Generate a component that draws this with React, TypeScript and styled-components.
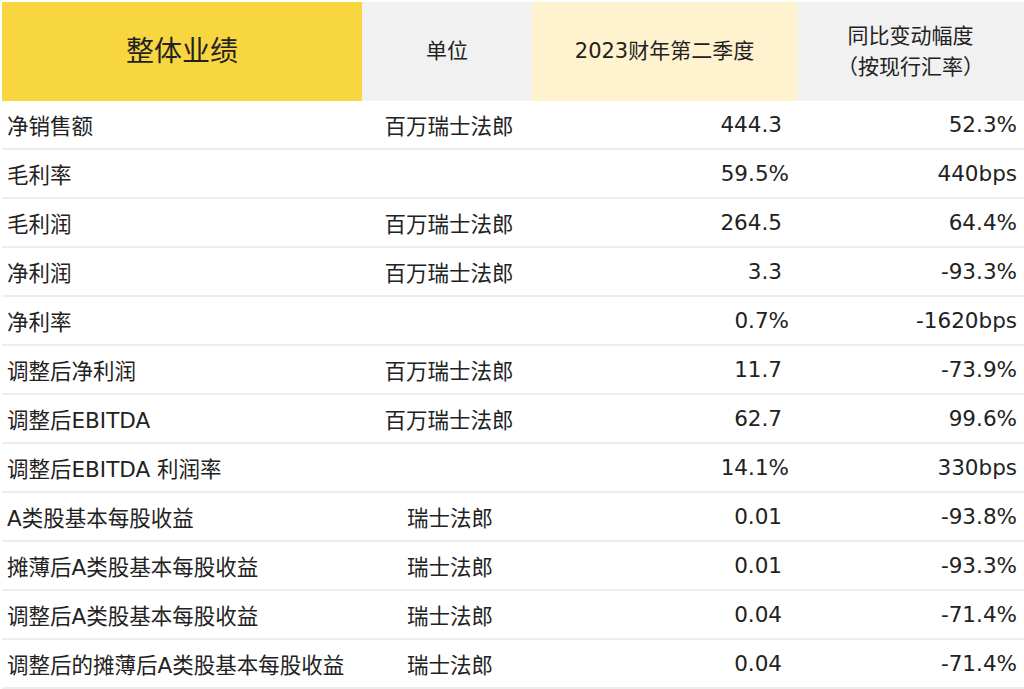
import React from 'react'
import styled, { createGlobalStyle } from 'styled-components'

const GlobalStyle = createGlobalStyle`
  body {
    margin: 0;
    background: #ffffff;
    font-family: "DejaVu Sans", "Noto Sans CJK SC", sans-serif;
    color: #222222;
  }
`;

const Table = styled("div")`
  display: grid;
  grid-template-columns: 360px 170px 265px 227px;
  padding: 2px 0 0 2px;
  width: 1024px;
  box-sizing: border-box;
`;

const HeadCell = styled("div")<{ $bg: string; $big?: boolean }>`
  height: 99px;
  background: ${p => p.$bg};
  display: flex;
  flex-direction: column;
  align-items: center;
  justify-content: center;
  font-size: ${p => (p.$big ? "28px" : "21px")};
  line-height: 31px;
  text-align: center;
`;

const Cell = styled("div")<{ $align: "left" | "center" | "right"; $padRight?: number }>`
  height: 47px;
  border-bottom: 2px solid #ededed;
  display: flex;
  align-items: center;
  justify-content: ${p =>
    p.$align === "left" ? "flex-start" : p.$align === "right" ? "flex-end" : "center"};
  padding: 0 ${p => p.$padRight ?? 0}px 0 ${p => (p.$align === "left" ? 5 : 0)}px;
  font-size: 21.5px;
  white-space: nowrap;
`;

const Unit = styled("span")<{ $short?: boolean }>`
  margin-left: ${p => (p.$short ? 6 : 4)}px;
`;

type Row = { name: string; unit: string; value: string; change: string }

const rows: Row[] = [
  { name: "净销售额", unit: "百万瑞士法郎", value: "444.3", change: "52.3%" },
  { name: "毛利率", unit: "", value: "59.5%", change: "440bps" },
  { name: "毛利润", unit: "百万瑞士法郎", value: "264.5", change: "64.4%" },
  { name: "净利润", unit: "百万瑞士法郎", value: "3.3", change: "-93.3%" },
  { name: "净利率", unit: "", value: "0.7%", change: "-1620bps" },
  { name: "调整后净利润", unit: "百万瑞士法郎", value: "11.7", change: "-73.9%" },
  { name: "调整后EBITDA", unit: "百万瑞士法郎", value: "62.7", change: "99.6%" },
  { name: "调整后EBITDA 利润率", unit: "", value: "14.1%", change: "330bps" },
  { name: "A类股基本每股收益", unit: "瑞士法郎", value: "0.01", change: "-93.8%" },
  { name: "摊薄后A类股基本每股收益", unit: "瑞士法郎", value: "0.01", change: "-93.3%" },
  { name: "调整后A类股基本每股收益", unit: "瑞士法郎", value: "0.04", change: "-71.4%" },
  { name: "调整后的摊薄后A类股基本每股收益", unit: "瑞士法郎", value: "0.04", change: "-71.4%" },
]

const App = () => {
  return (
    <>
      <GlobalStyle />
      <Table>
        <HeadCell $bg="#f8d640" $big>整体业绩</HeadCell>
        <HeadCell $bg="#f1f1f1">单位</HeadCell>
        <HeadCell $bg="#fff2cf">2023财年第二季度</HeadCell>
        <HeadCell $bg="#f1f1f1">
          <div>同比变动幅度</div>
          <div>（按现行汇率）</div>
        </HeadCell>
        {rows.map((r, i) => (
          <React.Fragment key={i}>
            <Cell $align="left">{r.name}</Cell>
            <Cell $align="center">
              <Unit $short={r.unit.length < 6}>{r.unit}</Unit>
            </Cell>
            <Cell $align="right" $padRight={r.value.endsWith("%") ? 8 : 15}>{r.value}</Cell>
            <Cell $align="right" $padRight={7}>{r.change}</Cell>
          </React.Fragment>
        ))}
      </Table>
    </>
  )
}

export default App
